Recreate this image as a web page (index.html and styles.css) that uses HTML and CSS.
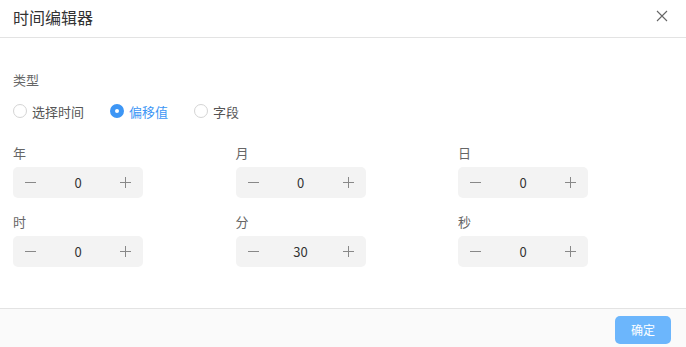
FILE: index.html
```html
<!DOCTYPE html>
<html lang="zh-CN">
<head>
    <meta charset="UTF-8">
    <meta name="viewport" content="width=device-width, initial-scale=1.0">
    <title>时间编辑器</title>
    <link rel="stylesheet" href="styles.css">
</head>
<body>
    <div class="dialog">
        <div class="dialog-header">
            <span class="dialog-title">时间编辑器</span>
            <button class="close-btn" type="button">
                <svg width="12" height="12" viewBox="0 0 12 12"><path d="M1 1L11 11M11 1L1 11" stroke="#666" stroke-width="1.1" fill="none"/></svg>
            </button>
        </div>

        <div class="dialog-body">
            <div class="field-label">类型</div>
            <div class="radio-group">
                <label class="radio"><span class="radio-circle"></span>选择时间</label>
                <label class="radio checked"><span class="radio-circle"></span>偏移值</label>
                <label class="radio"><span class="radio-circle"></span>字段</label>
            </div>

            <div class="offset-grid">
                <div class="offset-item">
                    <div class="field-label">年</div>
                    <div class="stepper">
                        <span class="step"><svg width="11" height="11" viewBox="0 0 11 11"><path d="M0 5.5H11" stroke="#888" fill="none"/></svg></span>
                        <span class="step-value">0</span>
                        <span class="step"><svg width="11" height="11" viewBox="0 0 11 11"><path d="M0 5.5H11M5.5 0V11" stroke="#888" fill="none"/></svg></span>
                    </div>
                </div>
                <div class="offset-item">
                    <div class="field-label">月</div>
                    <div class="stepper">
                        <span class="step"><svg width="11" height="11" viewBox="0 0 11 11"><path d="M0 5.5H11" stroke="#888" fill="none"/></svg></span>
                        <span class="step-value">0</span>
                        <span class="step"><svg width="11" height="11" viewBox="0 0 11 11"><path d="M0 5.5H11M5.5 0V11" stroke="#888" fill="none"/></svg></span>
                    </div>
                </div>
                <div class="offset-item">
                    <div class="field-label">日</div>
                    <div class="stepper">
                        <span class="step"><svg width="11" height="11" viewBox="0 0 11 11"><path d="M0 5.5H11" stroke="#888" fill="none"/></svg></span>
                        <span class="step-value">0</span>
                        <span class="step"><svg width="11" height="11" viewBox="0 0 11 11"><path d="M0 5.5H11M5.5 0V11" stroke="#888" fill="none"/></svg></span>
                    </div>
                </div>
                <div class="offset-item">
                    <div class="field-label">时</div>
                    <div class="stepper">
                        <span class="step"><svg width="11" height="11" viewBox="0 0 11 11"><path d="M0 5.5H11" stroke="#888" fill="none"/></svg></span>
                        <span class="step-value">0</span>
                        <span class="step"><svg width="11" height="11" viewBox="0 0 11 11"><path d="M0 5.5H11M5.5 0V11" stroke="#888" fill="none"/></svg></span>
                    </div>
                </div>
                <div class="offset-item">
                    <div class="field-label">分</div>
                    <div class="stepper">
                        <span class="step"><svg width="11" height="11" viewBox="0 0 11 11"><path d="M0 5.5H11" stroke="#888" fill="none"/></svg></span>
                        <span class="step-value">30</span>
                        <span class="step"><svg width="11" height="11" viewBox="0 0 11 11"><path d="M0 5.5H11M5.5 0V11" stroke="#888" fill="none"/></svg></span>
                    </div>
                </div>
                <div class="offset-item">
                    <div class="field-label">秒</div>
                    <div class="stepper">
                        <span class="step"><svg width="11" height="11" viewBox="0 0 11 11"><path d="M0 5.5H11" stroke="#888" fill="none"/></svg></span>
                        <span class="step-value">0</span>
                        <span class="step"><svg width="11" height="11" viewBox="0 0 11 11"><path d="M0 5.5H11M5.5 0V11" stroke="#888" fill="none"/></svg></span>
                    </div>
                </div>
            </div>
        </div>

        <div class="dialog-footer">
            <button class="confirm-btn" type="button">确定</button>
        </div>
    </div>
</body>
</html>
```

FILE: styles.css
```css
html, body {
    margin: 0;
    padding: 0;
    background: #fff;
}

body {
    font-family: "Noto Sans CJK SC", "Noto Sans", sans-serif;
    color: #333;
}

.dialog {
    display: flex;
    flex-direction: column;
    height: 100vh;
}

.dialog-header {
    display: flex;
    align-items: center;
    justify-content: space-between;
    height: 37px;
    padding: 0 13px 0 13px;
    border-bottom: 1px solid #e3e3e3;
}

.dialog-title {
    font-size: 16px;
    color: #333;
    margin-top: -4px;
}

.close-btn {
    border: none;
    background: none;
    padding: 0;
    margin-right: 5px;
    margin-top: -5px;
    width: 12px;
    height: 12px;
    display: flex;
}

.dialog-body {
    flex: 1;
    padding: 32px 13px 0 13px;
}

.field-label {
    font-size: 13px;
    line-height: 20px;
    color: #666;
}

.radio-group {
    display: flex;
    align-items: center;
    margin-top: 11px;
    height: 20px;
}

.radio {
    display: flex;
    align-items: center;
    font-size: 13px;
    color: #555;
    margin-right: 26px;
}

.radio-circle {
    box-sizing: border-box;
    width: 14px;
    height: 14px;
    border-radius: 50%;
    border: 1px solid #d4d4d4;
    margin-right: 5px;
    background: #fff;
}

.radio.checked {
    color: #3d96f5;
}

.radio.checked .radio-circle {
    border: 5px solid #3d96f5;
    background: #fff;
}

.offset-grid {
    display: grid;
    grid-template-columns: repeat(3, 222.5px);
    row-gap: 14px;
    margin-top: 22px;
}

.offset-item .field-label {
    margin-bottom: 4px;
}

.stepper {
    display: flex;
    align-items: center;
    width: 130px;
    height: 31px;
    background: #f3f3f3;
    border-radius: 5px;
}

.step {
    display: flex;
    align-items: center;
    justify-content: center;
    width: 35px;
    height: 100%;
}

.step-value {
    flex: 1;
    text-align: center;
    font-size: 13px;
    color: #333;
}

.dialog-footer {
    display: flex;
    align-items: center;
    justify-content: flex-end;
    height: 38px;
    padding: 0 15px;
    border-top: 1px solid #e3e3e3;
    background: #fafafa;
}

.confirm-btn {
    width: 56px;
    height: 28px;
    margin-top: 3px;
    border: none;
    border-radius: 5px;
    background: #6cb6fc;
    color: #fff;
    font-family: "Noto Sans CJK SC", sans-serif;
    font-size: 12px;
}
```
